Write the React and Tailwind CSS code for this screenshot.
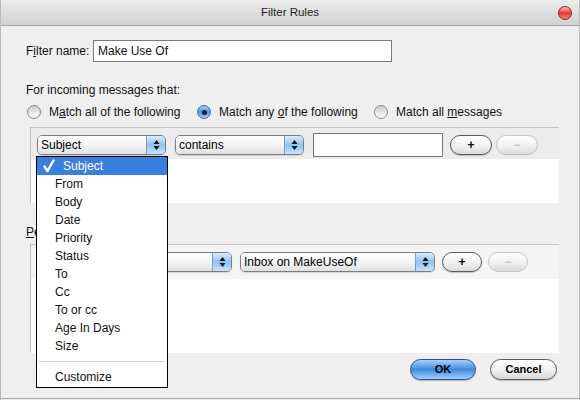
import React from 'react'

const MENU_ITEMS = ['From', 'Body', 'Date', 'Priority', 'Status', 'To', 'Cc', 'To or cc', 'Age In Days', 'Size']

function Arrows() {
  return (
    <svg width="7" height="12" viewBox="0 0 7 12">
      <path d="M3.5 1 L6.5 5 L0.5 5 Z" fill="#111" />
      <path d="M3.5 11 L6.5 7 L0.5 7 Z" fill="#111" />
    </svg>
  )
}

function PopUp({ label, className }) {
  return (
    <div className={`flex h-[20px] rounded-[5px] border border-[#7d7d7d] overflow-hidden shadow-[0_1px_1px_rgba(0,0,0,0.12)] ${className}`}>
      <div className="flex-1 flex items-center pl-[3px] bg-linear-to-b from-white via-[#f4f4f4] to-[#e0e0e0] text-[12px] text-black whitespace-nowrap">
        {label}
      </div>
      <div className="w-[19px] flex items-center justify-center border-l border-[#7a9cc8] bg-linear-to-b from-[#dcecfd] via-[#8ec2f5] to-[#c6e3ff]">
        <Arrows />
      </div>
    </div>
  )
}

function Pill({ children, disabled, className }) {
  return (
    <div
      className={`h-[20px] rounded-full flex items-center justify-center text-[12px] font-bold bg-linear-to-b from-white via-[#f2f2f2] to-[#dcdcdc] ${
        disabled ? 'border border-[#c4c4c4] text-[#c8c8c8]' : 'border border-[#5a5a5a] text-black shadow-[0_1px_1px_rgba(0,0,0,0.2)]'
      } ${className}`}
    >
      {children}
    </div>
  )
}

function Radio({ checked }) {
  if (checked) {
    return (
      <div className="w-[14px] h-[14px] rounded-full border border-[#3f6797] bg-linear-to-b from-[#a9d2fa] via-[#4b95e6] to-[#9fd0ff] flex items-center justify-center shrink-0">
        <div className="w-[5px] h-[5px] rounded-full bg-[#0d1c33]" />
      </div>
    )
  }
  return <div className="w-[14px] h-[14px] rounded-full border border-[#8a8a8a] bg-linear-to-b from-[#cfcfcf] to-[#fbfbfb] shrink-0" />
}

export default function App() {
  return (
    <div className="relative w-[580px] h-[400px] bg-[#efefef] font-['Liberation_Sans',Arial,sans-serif] text-[12px] text-[#111] overflow-hidden border-x border-[#b9b9b9]">
      {/* title bar */}
      <div className="relative h-[26px] flex items-center justify-center bg-linear-to-b from-[#ebebeb] to-[#d2d2d2] border-b border-[#a3a3a3] rounded-t-[5px]">
        <span className="text-[11.5px] text-[#1c1c1c]">Filter Rules</span>
        <div className="absolute right-[7px] top-[6px] w-[14px] h-[14px] rounded-full border border-[#8b1e1e] bg-linear-to-b from-[#ffb0a8] via-[#e2383a] to-[#f08079]" />
      </div>

      {/* filter name */}
      <div className="flex items-center mt-[14px] pl-[25px] h-[22px]">
        <span className="w-[67px]">F<span className="underline">i</span>lter name:</span>
        <div className="w-[299px] h-[22px] bg-white border border-[#7a7a7a] flex items-center pl-[4px]">Make Use Of</div>
      </div>

      <div className="mt-[21px] pl-[25px] h-[14px] leading-[14px]">For incoming messages that:</div>

      <div className="mt-[8px] pl-[26px] h-[14px] flex items-center">
        <div className="w-[170px] flex items-center gap-[8px]">
          <Radio />
          <span>M<span className="underline">a</span>tch all of the following</span>
        </div>
        <div className="w-[177px] flex items-center gap-[8px]">
          <Radio checked />
          <span>Match any <span className="underline">o</span>f the following</span>
        </div>
        <div className="flex items-center gap-[8px]">
          <Radio />
          <span>Match all <span className="underline">m</span>essages</span>
        </div>
      </div>

      {/* criteria panel */}
      <div className="mt-[8px] ml-[29px] w-[529px] h-[76px] border-t border-l border-[#c3c3c3] bg-white">
        <div className="h-[31px] pt-[3px] bg-[#ececec] flex items-center pl-[6px]">
          <PopUp label="Subject" className="w-[129px]" />
          <PopUp label="contains" className="w-[129px] ml-[9px]" />
          <div className="w-[130px] h-[24px] ml-[9px] bg-white border border-[#777]" />
          <Pill className="w-[42px] ml-[7px]">+</Pill>
          <Pill disabled className="w-[42px] ml-[4px]">−</Pill>
        </div>
      </div>

      <div className="mt-[22px] pl-[25px] h-[14px] leading-[14px]">
        <span className="underline">P</span>erform these actions:
      </div>

      {/* actions panel */}
      <div className="mt-[5px] ml-[29px] w-[529px] h-[109px] border-t border-l border-[#c3c3c3] bg-white">
        <div className="h-[34px] bg-[#f4f4f4] flex items-center pl-[6px]">
          <PopUp label="" className="w-[195px]" />
          <PopUp label="Inbox on MakeUseOf" className="w-[195px] ml-[8px]" />
          <Pill className="w-[40px] ml-[7px]">+</Pill>
          <Pill disabled className="w-[40px] ml-[6px]">−</Pill>
        </div>
      </div>

      {/* buttons */}
      <div className="mt-[6px] flex justify-end pr-[22px] gap-[14px]">
        <div className="w-[66px] h-[21px] rounded-full border border-[#2b4f86] bg-linear-to-b from-[#a8d0f8] via-[#3f8ae0] to-[#9cd0ff] flex items-center justify-center text-[11px] font-bold text-black shadow-[0_1px_1px_rgba(0,0,0,0.25)]">
          OK
        </div>
        <div className="w-[67px] h-[21px] rounded-full border border-[#5a5a5a] bg-linear-to-b from-white via-[#f1f1f1] to-[#d8d8d8] flex items-center justify-center text-[11px] font-bold text-black shadow-[0_1px_1px_rgba(0,0,0,0.2)]">
          Cancel
        </div>
      </div>

      <div className="absolute left-0 right-0 top-[398px] border-t border-[#a8a8a8]" />

      {/* open pop-up menu */}
      <div className="absolute left-[35px] top-[156px] w-[132px] h-[232px] border border-black bg-white">
        <div className="h-[18px] bg-[#3b7fde] text-white flex items-center pl-[6px]">
          <svg width="20" height="14" viewBox="0 0 20 14" className="shrink-0">
            <path d="M1.5 7.5 L4.5 12 L10.5 1.5" fill="none" stroke="#fff" strokeWidth="2.4" strokeLinecap="round" strokeLinejoin="round" />
          </svg>
          <span>Subject</span>
        </div>
        {MENU_ITEMS.map((item) => (
          <div key={item} className="h-[18px] flex items-center pl-[18px]">
            {item}
          </div>
        ))}
        <div className="h-[13px] flex items-center px-[2px]">
          <div className="w-full border-t border-[#d2d2d2]" />
        </div>
        <div className="h-[18px] flex items-center pl-[18px]">Customize</div>
      </div>
    </div>
  )
}
